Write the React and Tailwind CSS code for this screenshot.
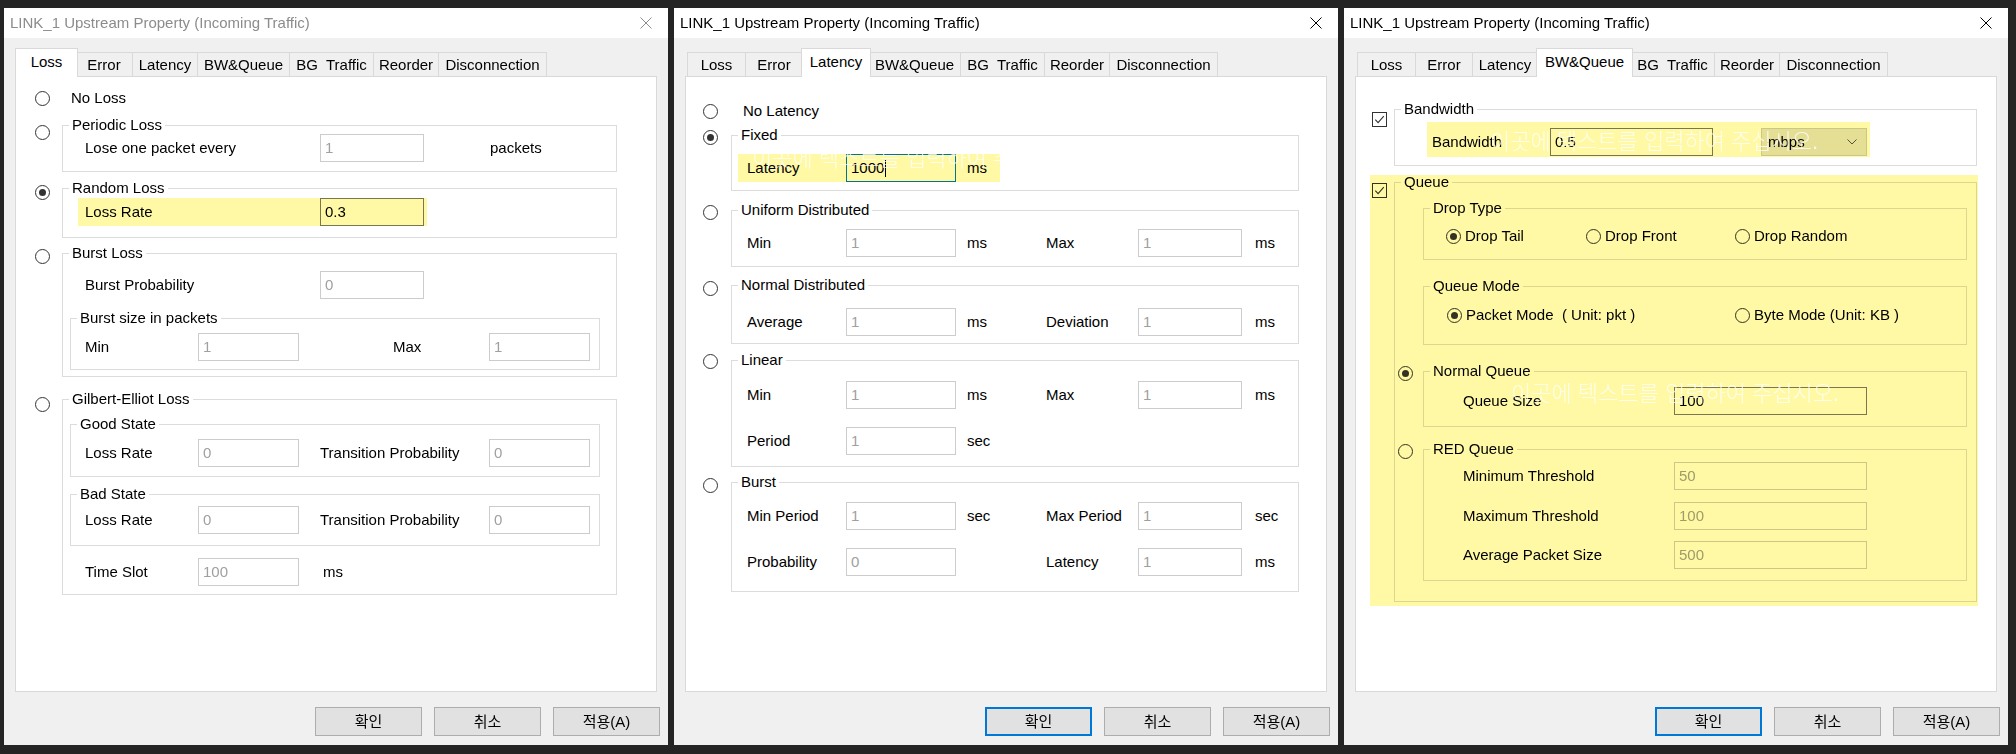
import React from 'react';

const TABS = [
  ['Loss', 'w-[59px]', 'w-[63px]'],
  ['Error', 'w-[58px]', 'w-[62px]'],
  ['Latency', 'w-[66px]', 'w-[70px]'],
  ['BW&Queue', 'w-[93px]', 'w-[97px]'],
  ['BG  Traffic', 'w-[85px]', 'w-[89px]'],
  ['Reorder', 'w-[66px]', 'w-[70px]'],
  ['Disconnection', 'w-[109px]', 'w-[113px]'],
];

const GHOST = '이곳에 텍스트를 입력하여 주십시오.';

function Radio({ checked, className = '' }) {
  return (
    <span className={`flex h-[15px] w-[15px] shrink-0 items-center justify-center rounded-full border border-[#333333] bg-white ${className}`}>
      {checked && <span className="h-[7px] w-[7px] rounded-full bg-[#333333]" />}
    </span>
  );
}

function Checkbox() {
  return (
    <span className="flex h-[15px] w-[15px] items-center justify-center border border-[#333333] bg-white">
      <svg viewBox="0 0 13 13" className="h-[13px] w-[13px]">
        <path d="M2.3 6.6 L5.1 9.6 L10.8 3.2" fill="none" stroke="#333333" strokeWidth="1.1" />
      </svg>
    </span>
  );
}

function Field({ value, w, on, focus, className = '' }) {
  const border = focus ? 'border-[#0078d7]' : on ? 'border-[#7a7a7a]' : 'border-[#cccccc]';
  const color = on || focus ? 'text-black' : 'text-[#a0a0a0]';
  return (
    <div className={`flex h-[28px] shrink-0 items-center border bg-white pl-[4px] ${border} ${color} ${w} ${className}`}>
      {value}
      {focus && <span className="ml-px h-[17px] w-px bg-black" />}
    </div>
  );
}

function Group({ label, className = '', children }) {
  return (
    <fieldset className={`min-w-0 border border-[#dcdcdc] ${className}`}>
      <legend className="ml-[6px] px-[3px] leading-[18px]">{label}</legend>
      {children}
    </fieldset>
  );
}

function Hl({ className = '' }) {
  return <span className={`pointer-events-none absolute bg-[#fff9a6] mix-blend-multiply ${className}`} />;
}

// faint placeholder text left on the screenshot by the capture tool
function Ghost({ className = '' }) {
  return (
    <span className={`pointer-events-none absolute whitespace-pre text-[22px] font-light leading-[24px] text-white/75 ${className}`}>
      {GHOST}
    </span>
  );
}

function Dialog({ active, activeTitle, children }) {
  return (
    <div className="flex h-[737px] w-[664px] shrink-0 flex-col bg-[#f0f0f0]">
      <div className="flex h-[30px] shrink-0 items-center justify-between bg-white pl-[6px] pr-[16px]">
        <span className={activeTitle ? 'text-black' : 'text-[#8c8c8c]'}>LINK_1 Upstream Property (Incoming Traffic)</span>
        <svg viewBox="0 0 12 12" className={`h-[12px] w-[12px] ${activeTitle ? 'text-black' : 'text-[#8c8c8c]'}`}>
          <path d="M0.5 0.5 L11.5 11.5 M11.5 0.5 L0.5 11.5" stroke="currentColor" strokeWidth="1" />
        </svg>
      </div>
      <div className="flex h-[38px] shrink-0 items-end pl-[13px]">
        {TABS.map(([name, w, wa], i) =>
          name === active ? (
            <div key={name} className={`relative z-10 -mx-[2px] -mb-px flex h-[29px] items-start justify-center whitespace-pre border border-b-0 border-[#d9d9d9] bg-white pt-[4px] ${wa}`}>
              {name}
            </div>
          ) : (
            <div key={name} className={`flex h-[24px] items-center justify-center whitespace-pre border border-b-0 border-[#d9d9d9] bg-[#f0f0f0] ${i > 0 ? '-ml-px' : ''} ${w}`}>
              {name}
            </div>
          )
        )}
      </div>
      <div className="relative mx-[11px] h-[616px] shrink-0 border border-[#d9d9d9] bg-white">{children}</div>
      <div className="flex shrink-0 justify-end gap-[12px] pr-[8px] pt-[15px]">
        <div className={`flex h-[29px] w-[107px] items-center justify-center bg-[#e1e1e1] ${activeTitle ? 'border-2 border-[#0078d7]' : 'border border-[#adadad]'}`}>확인</div>
        <div className="flex h-[29px] w-[107px] items-center justify-center border border-[#adadad] bg-[#e1e1e1]">취소</div>
        <div className="flex h-[29px] w-[107px] items-center justify-center border border-[#adadad] bg-[#e1e1e1]">적용(A)</div>
      </div>
    </div>
  );
}

function LossPage() {
  return (
    <div className="pr-[39px] pt-[12px]">
      <div className="flex h-[18px] items-center">
        <Radio className="ml-[19px]" />
        <span className="ml-[21px]">No Loss</span>
      </div>

      <div className="mt-[9px] flex">
        <div className="w-[46px] shrink-0 pl-[19px] pt-[9px]"><Radio /></div>
        <Group label="Periodic Loss" className="flex-1 pb-[9px]">
          <div className="flex h-[28px] items-center pl-[22px]">
            <span className="w-[235px]">Lose one packet every</span>
            <Field value="1" w="w-[104px]" />
            <span className="ml-[66px]">packets</span>
          </div>
        </Group>
      </div>

      <div className="mt-[7px] flex">
        <div className="w-[46px] shrink-0 pl-[19px] pt-[6px]"><Radio checked /></div>
        <Group label="Random Loss" className="flex-1 pb-[11px]">
          <div className="relative ml-[15px] mt-[1px] flex h-[28px] w-[349px] items-center pl-[7px]">
            <span className="w-[235px]">Loss Rate</span>
            <Field value="0.3" on w="w-[104px]" />
            <Hl className="inset-0" />
          </div>
        </Group>
      </div>

      <div className="mt-[6px] flex">
        <div className="w-[46px] shrink-0 pl-[19px] pt-[5px]"><Radio /></div>
        <Group label="Burst Loss" className="flex-1 pb-[6px]">
          <div className="mt-[9px] flex h-[28px] items-center pl-[22px]">
            <span className="w-[235px]">Burst Probability</span>
            <Field value="0" w="w-[104px]" />
          </div>
          <Group label="Burst size in packets" className="ml-[7px] mr-[16px] mt-[10px] pb-[8px]">
            <div className="mt-[6px] flex h-[28px] items-center pl-[14px]">
              <span className="w-[113px]">Min</span>
              <Field value="1" w="w-[101px]" />
              <span className="ml-[94px] w-[96px]">Max</span>
              <Field value="1" w="w-[101px]" />
            </div>
          </Group>
        </Group>
      </div>

      <div className="mt-[13px] flex">
        <div className="w-[46px] shrink-0 pl-[19px] pt-[7px]"><Radio /></div>
        <Group label="Gilbert-Elliot Loss" className="flex-1 pb-[8px]">
          <Group label="Good State" className="ml-[7px] mr-[16px] mt-[7px] pb-[9px]">
            <div className="mt-[6px] flex h-[28px] items-center pl-[14px]">
              <span className="w-[113px]">Loss Rate</span>
              <Field value="0" w="w-[101px]" />
              <span className="ml-[21px] w-[169px]">Transition Probability</span>
              <Field value="0" w="w-[101px]" />
            </div>
          </Group>
          <Group label="Bad State" className="ml-[7px] mr-[16px] mt-[8px] pb-[11px]">
            <div className="mt-[3px] flex h-[28px] items-center pl-[14px]">
              <span className="w-[113px]">Loss Rate</span>
              <Field value="0" w="w-[101px]" />
              <span className="ml-[21px] w-[169px]">Transition Probability</span>
              <Field value="0" w="w-[101px]" />
            </div>
          </Group>
          <div className="mt-[12px] flex h-[28px] items-center pl-[22px]">
            <span className="w-[113px]">Time Slot</span>
            <Field value="100" w="w-[101px]" />
            <span className="ml-[24px]">ms</span>
          </div>
        </Group>
      </div>
    </div>
  );
}

function LatRow({ a, b, ua, c, d, ub, className = '' }) {
  return (
    <div className={`flex h-[28px] items-center pl-[15px] ${className}`}>
      <span className="w-[99px]">{a}</span>
      <Field value={b} w="w-[110px]" />
      <span className="ml-[11px] w-[79px]">{ua}</span>
      {c && <span className="w-[92px]">{c}</span>}
      {c && <Field value={d} w="w-[104px]" />}
      {ub && <span className="ml-[13px]">{ub}</span>}
    </div>
  );
}

function LatencyPage() {
  return (
    <div className="pr-[27px] pt-[25px]">
      <div className="flex h-[18px] items-center">
        <Radio className="ml-[17px]" />
        <span className="ml-[25px]">No Latency</span>
      </div>

      <div className="mt-[6px] flex">
        <div className="w-[45px] shrink-0 pl-[17px] pt-[4px]"><Radio checked /></div>
        <Group label="Fixed" className="flex-1 pb-[8px]">
          <div className="relative ml-[6px] mt-[10px] flex h-[28px] w-[262px] items-center pl-[9px]">
            <span className="w-[99px]">Latency</span>
            <Field value="1000" focus w="w-[110px]" />
            <span className="ml-[11px]">ms</span>
            <Hl className="inset-0" />
            <Ghost className="-top-[7px] left-[14px]" />
          </div>
        </Group>
      </div>

      <div className="mt-[10px] flex">
        <div className="w-[45px] shrink-0 pl-[17px] pt-[4px]"><Radio /></div>
        <Group label="Uniform Distributed" className="flex-1 pb-[9px]">
          <LatRow className="mt-[10px]" a="Min" b="1" ua="ms" c="Max" d="1" ub="ms" />
        </Group>
      </div>

      <div className="mt-[9px] flex">
        <div className="w-[45px] shrink-0 pl-[17px] pt-[5px]"><Radio /></div>
        <Group label="Normal Distributed" className="flex-1 pb-[7px]">
          <LatRow className="mt-[14px]" a="Average" b="1" ua="ms" c="Deviation" d="1" ub="ms" />
        </Group>
      </div>

      <div className="mt-[7px] flex">
        <div className="w-[45px] shrink-0 pl-[17px] pt-[3px]"><Radio /></div>
        <Group label="Linear" className="flex-1 pb-[11px]">
          <LatRow className="mt-[12px]" a="Min" b="1" ua="ms" c="Max" d="1" ub="ms" />
          <LatRow className="mt-[18px]" a="Period" b="1" ua="sec" />
        </Group>
      </div>

      <div className="mt-[6px] flex">
        <div className="w-[45px] shrink-0 pl-[17px] pt-[5px]"><Radio /></div>
        <Group label="Burst" className="flex-1 pb-[15px]">
          <LatRow className="mt-[11px]" a="Min Period" b="1" ua="sec" c="Max Period" d="1" ub="sec" />
          <LatRow className="mt-[18px]" a="Probability" b="0" ua="" c="Latency" d="1" ub="ms" />
        </Group>
      </div>
    </div>
  );
}

function QueueRow({ label, value, className = '' }) {
  return (
    <div className={`flex h-[28px] items-center pl-[39px] ${className}`}>
      <span className="w-[211px]">{label}</span>
      <Field value={value} w="w-[193px]" />
    </div>
  );
}

function QueuePage() {
  return (
    <div className="pr-[19px] pt-[23px]">
      <div className="flex">
        <div className="w-[38px] shrink-0 pl-[16px] pt-[12px]"><Checkbox /></div>
        <Group label="Bandwidth" className="flex-1 pb-[8px]">
          <div className="relative ml-[32px] mt-[4px] flex h-[35px] w-[443px] items-center pl-[5px] pt-[5px]">
            <span className="w-[118px]">Bandwidth</span>
            <Field value="0.5" on w="w-[163px]" />
            <div className="ml-[48px] flex h-[28px] w-[106px] items-center justify-between border border-[#cccccc] bg-[#e5e5e5] pl-[6px] pr-[9px]">
              <span>mbps</span>
              <svg viewBox="0 0 10 6" className="h-[6px] w-[10px]">
                <path d="M0.5 0.5 L5 5 L9.5 0.5" fill="none" stroke="#555555" strokeWidth="1" />
              </svg>
            </div>
            <Hl className="inset-0" />
            <Ghost className="left-[63px] top-[8px]" />
          </div>
        </Group>
      </div>

      <div className="relative mt-[7px] flex">
        <div className="w-[38px] shrink-0 pl-[16px] pt-[10px]"><Checkbox /></div>
        <Group label="Queue" className="flex-1 pb-[20px]">
          <Group label="Drop Type" className="ml-[28px] mr-[9px] mt-[8px] pb-[14px]">
            <div className="mt-[10px] flex h-[18px] items-center pl-[22px]">
              <div className="flex w-[140px] items-center"><Radio checked /><span className="ml-[4px]">Drop Tail</span></div>
              <div className="flex w-[149px] items-center"><Radio /><span className="ml-[4px]">Drop Front</span></div>
              <div className="flex items-center"><Radio /><span className="ml-[4px]">Drop Random</span></div>
            </div>
          </Group>
          <Group label="Queue Mode" className="ml-[28px] mr-[9px] mt-[17px] pb-[20px]">
            <div className="mt-[11px] flex h-[18px] items-center pl-[23px]">
              <div className="flex w-[288px] items-center"><Radio checked /><span className="ml-[4px] whitespace-pre">Packet Mode  ( Unit: pkt )</span></div>
              <div className="flex items-center"><Radio /><span className="ml-[4px]">Byte Mode (Unit: KB )</span></div>
            </div>
          </Group>
          <div className="mt-[17px] flex">
            <div className="w-[28px] shrink-0 pl-[3px] pt-[4px]"><Radio checked /></div>
            <Group label="Normal Queue" className="mr-[9px] flex-1 pb-[11px]">
              <div className="mt-[7px] flex h-[28px] items-center pl-[39px]">
                <span className="w-[211px]">Queue Size</span>
                <Field value="100" on w="w-[193px]" />
              </div>
            </Group>
          </div>
          <div className="mt-[13px] flex">
            <div className="w-[28px] shrink-0 pl-[3px] pt-[4px]"><Radio /></div>
            <Group label="RED Queue" className="mr-[9px] flex-1 pb-[11px]">
              <QueueRow className="mt-[4px]" label="Minimum Threshold" value="50" />
              <QueueRow className="mt-[12px]" label="Maximum Threshold" value="100" />
              <QueueRow className="mt-[11px]" label="Average Packet Size" value="500" />
            </Group>
          </div>
        </Group>
        <Hl className="-bottom-[4px] -right-px left-[14px] top-[2px]" />
        <Ghost className="left-[155px] top-[209px]" />
      </div>
    </div>
  );
}

export default function App() {
  return (
    <div className="flex h-[754px] w-[2016px] gap-[6px] overflow-hidden bg-[#242424] pl-[4px] pt-[8px] font-[Liberation_Sans,Noto_Sans_CJK_KR,sans-serif] text-[15px] leading-[18px] text-black">
      <Dialog active="Loss">
        <LossPage />
      </Dialog>
      <Dialog active="Latency" activeTitle>
        <LatencyPage />
      </Dialog>
      <Dialog active="BW&Queue" activeTitle>
        <QueuePage />
      </Dialog>
    </div>
  );
}
